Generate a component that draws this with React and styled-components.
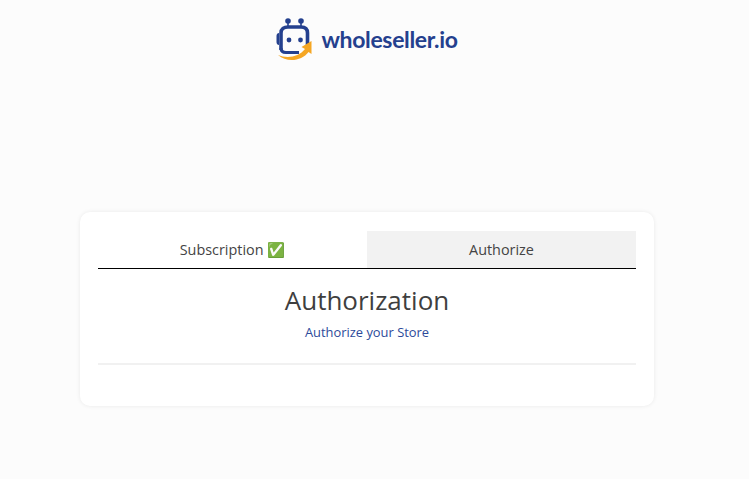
import React from "react";
import styled, { createGlobalStyle } from "styled-components";

const GlobalStyle = createGlobalStyle`
  html, body {
    margin: 0;
    padding: 0;
    background: #fcfcfc;
    font-family: "Open Sans", sans-serif;
  }
`;

const Page = styled.div`
  width: 734px;
  height: 479px;
  overflow: hidden;
  display: flex;
  flex-direction: column;
  align-items: center;
`;

const Brand = styled.div`
  display: flex;
  align-items: center;
  gap: 9px;
  height: 46px;
  margin-top: 16px;
`;

const LogoSvg = styled.svg`
  flex-shrink: 0;
  display: block;
`;

const BrandName = styled.span`
  font-family: Lato, sans-serif;
  font-size: 23px;
  font-weight: 700;
  letter-spacing: -0.35px;
  color: #24408e;
  line-height: 46px;
  white-space: nowrap;
`;

const Card = styled.div`
  box-sizing: border-box;
  width: 574px;
  height: 194px;
  margin-top: 150px;
  padding: 19px 18px 0;
  background: #fff;
  border-radius: 10px;
  box-shadow: 0 0 4px rgba(0, 0, 0, 0.08);
`;

const Tabs = styled.div`
  display: grid;
  grid-template-columns: 1fr 1fr;
  height: 38px;
  border-bottom: 1px solid #000;
  box-sizing: border-box;
`;

const Tab = styled.div`
  display: flex;
  align-items: center;
  justify-content: center;
  font-size: 14.4px;
  color: #444;
  white-space: pre;
  background: ${(props) => (props.$muted ? "#f2f2f2" : "transparent")};
`;

const Heading = styled.h1`
  margin: 14px 0 0;
  font-size: 26px;
  font-weight: 400;
  line-height: 35px;
  color: #3f3f3f;
  text-align: center;
`;

const Sub = styled.p`
  margin: 6px 0 0;
  font-size: 12.9px;
  line-height: 17px;
  color: #2d4a9a;
  text-align: center;
`;

const Rule = styled.hr`
  margin: 22px 0 0;
  border: 0;
  height: 2px;
  background: #f1f1f1;
`;

const LogoMark = () => (
  <LogoSvg width="36" height="46" viewBox="0 0 36 46" fill="none">
    <circle cx="12" cy="5" r="2.8" fill="#24408e" />
    <circle cx="25" cy="5" r="2.8" fill="#24408e" />
    <rect x="11.2" y="6" width="1.6" height="5" fill="#24408e" />
    <rect x="24.2" y="6" width="1.6" height="5" fill="#24408e" />
    <path
      d="M5 34 V17 C5 13 8 11 12 11 H25 C29 11 31.5 13 31.5 17 V29"
      stroke="#24408e"
      strokeWidth="3.6"
      fill="none"
    />
    <path d="M0.5 20 C0.5 18 1.5 17 3 17 V29 C1.5 29 0.5 28 0.5 26 Z" fill="#24408e" />
    <path d="M5 32 C5 35 7 36.5 10 36.5 H23" stroke="#24408e" strokeWidth="3" fill="none" />
    <circle cx="13" cy="24" r="2.4" fill="#24408e" />
    <circle cx="24.5" cy="24" r="2.4" fill="#24408e" />
    <path
      d="M2 39 C11 43 23 41 29 33 L25.5 31 L35.5 25 L35.5 38 L32.5 36 C26 45 11 47 2 39 Z"
      fill="#f5a623"
    />
  </LogoSvg>
);

export default function App() {
  return (
    <>
      <GlobalStyle />
      <Page>
        <Brand>
          <LogoMark />
          <BrandName>wholeseller.io</BrandName>
        </Brand>
        <Card>
          <Tabs>
            <Tab>Subscription ✅</Tab>
            <Tab $muted>Authorize</Tab>
          </Tabs>
          <Heading>Authorization</Heading>
          <Sub>Authorize your Store</Sub>
          <Rule />
        </Card>
      </Page>
    </>
  );
}
